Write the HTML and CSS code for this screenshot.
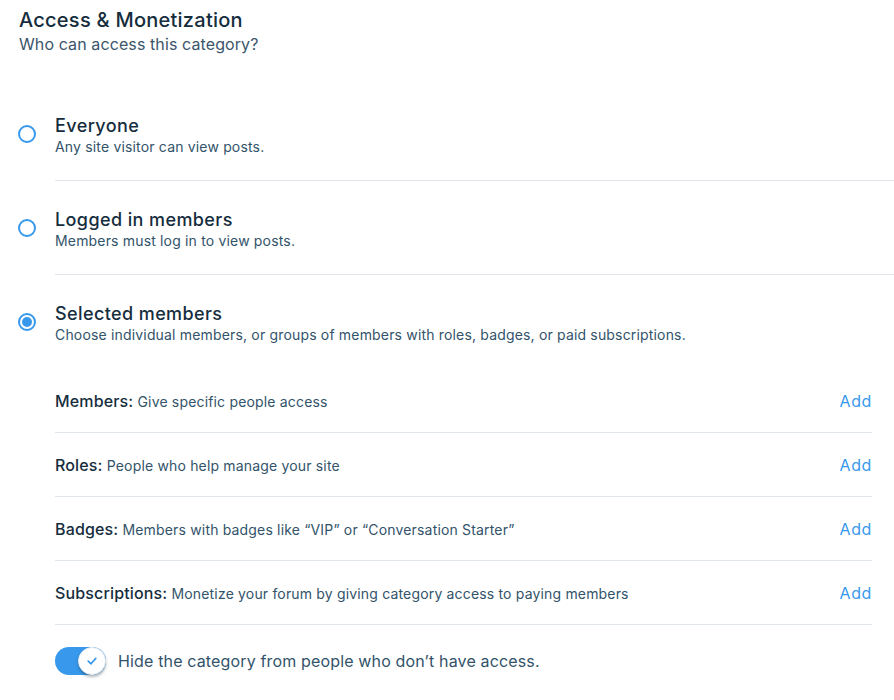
FILE: index.html
```html
<!DOCTYPE html>
<html>
<head>
<meta charset="utf-8">
<link rel="stylesheet" href="styles.css">
</head>
<body>
<div class="page">
  <header class="header">
    <h1 class="title">Access &amp; Monetization</h1>
    <p class="subtitle">Who can access this category?</p>
  </header>

  <div class="option">
    <div class="radio-col"><span class="radio"></span></div>
    <div class="option-body">
      <div class="option-title">Everyone</div>
      <div class="option-desc">Any site visitor can view posts.</div>
    </div>
  </div>

  <div class="option">
    <div class="radio-col"><span class="radio"></span></div>
    <div class="option-body">
      <div class="option-title">Logged in members</div>
      <div class="option-desc">Members must log in to view posts.</div>
    </div>
  </div>

  <div class="option selected">
    <div class="radio-col"><span class="radio checked"></span></div>
    <div class="option-body no-border">
      <div class="option-title">Selected members</div>
      <div class="option-desc">Choose individual members, or groups of members with roles, badges, or paid subscriptions.</div>

      <div class="sublist">
        <div class="subrow first">
          <div class="subtext"><span class="sublabel">Members:</span> Give specific people access</div>
          <a class="add">Add</a>
        </div>
        <div class="subrow">
          <div class="subtext"><span class="sublabel">Roles:</span> People who help manage your site</div>
          <a class="add">Add</a>
        </div>
        <div class="subrow">
          <div class="subtext"><span class="sublabel">Badges:</span> Members with badges like “VIP” or “Conversation Starter”</div>
          <a class="add">Add</a>
        </div>
        <div class="subrow">
          <div class="subtext"><span class="sublabel">Subscriptions:</span> Monetize your forum by giving category access to paying members</div>
          <a class="add">Add</a>
        </div>
      </div>

      <div class="toggle-row">
        <span class="toggle">
          <span class="knob">
            <svg width="16" height="16" viewBox="0 0 16 16"><path d="M4.2 8.2 L7 10.8 L11.8 5.4" fill="none" stroke="#3899ec" stroke-width="1.7" stroke-linecap="round" stroke-linejoin="round"/></svg>
          </span>
        </span>
        <span class="toggle-label">Hide the category from people who don’t have access.</span>
      </div>
    </div>
  </div>
</div>
</body>
</html>
```

FILE: styles.css
```css
* { box-sizing: border-box; }
html, body { margin: 0; padding: 0; background: #ffffff; }
body {
  font-family: "Inter", "Noto Sans", sans-serif;
  color: #162d3d;
  width: 894px;
  height: 700px;
  overflow: hidden;
}
.header { padding: 7px 0 0 19px; height: 87px; }
.title {
  margin: 0;
  font-size: 20px;
  line-height: 26px;
  font-weight: 450;
  letter-spacing: 0.25px;
  color: #162d3d;
}
.subtitle {
  margin: 0;
  font-size: 16px;
  line-height: 22px;
  letter-spacing: 0.1px;
  color: #3b556b;
}
.option { display: flex; }
.radio-col { width: 55px; flex: none; padding: 38px 0 0 18px; }
.radio {
  display: block;
  width: 18px;
  height: 18px;
  border: 2px solid #3899ec;
  border-radius: 50%;
  background: #fff;
}
.radio.checked { position: relative; }
.radio.checked::after {
  content: "";
  position: absolute;
  left: 2px; top: 2px;
  width: 10px; height: 10px;
  border-radius: 50%;
  background: #3899ec;
}
.option-body {
  flex: 1;
  padding: 28px 0 23px;
  border-bottom: 1px solid #dfe5eb;
}
.option-body.no-border { border-bottom: none; padding-bottom: 0; }
.option-title {
  font-size: 18px;
  line-height: 22px;
  font-weight: 450;
  letter-spacing: 0.4px;
  color: #162d3d;
}
.option-desc {
  font-size: 14px;
  line-height: 20px;
  letter-spacing: 0.17px;
  color: #32536a;
}
.sublist { margin: 24px 22px 0 0; }
.subrow {
  display: flex;
  align-items: center;
  justify-content: space-between;
  height: 64px;
  border-bottom: 1px solid #dfe5eb;
}
.subrow.first { height: 64px; padding-top: 1px; }
.subtext { font-size: 14px; letter-spacing: 0.17px; color: #32536a; }
.sublabel { font-size: 16px; font-weight: 450; letter-spacing: 0.15px; color: #162d3d; }
.add { font-size: 16px; letter-spacing: 0.6px; color: #3899ec; cursor: pointer; }
.toggle-row {
  display: flex;
  align-items: center;
  gap: 12px;
  margin-top: 22px;
}
.toggle {
  position: relative;
  width: 51px;
  height: 28px;
  border-radius: 14px;
  background: #3899ec;
  flex: none;
}
.knob {
  position: absolute;
  right: 0; top: 0;
  width: 28px; height: 28px;
  border-radius: 50%;
  background: #fff;
  border: 1px solid #e6ecf1;
  box-shadow: 0 2px 3px rgba(22, 45, 61, 0.35);
  display: flex;
  align-items: center;
  justify-content: center;
}
.toggle-label { font-size: 16px; letter-spacing: 0.15px; color: #32536a; }
```
